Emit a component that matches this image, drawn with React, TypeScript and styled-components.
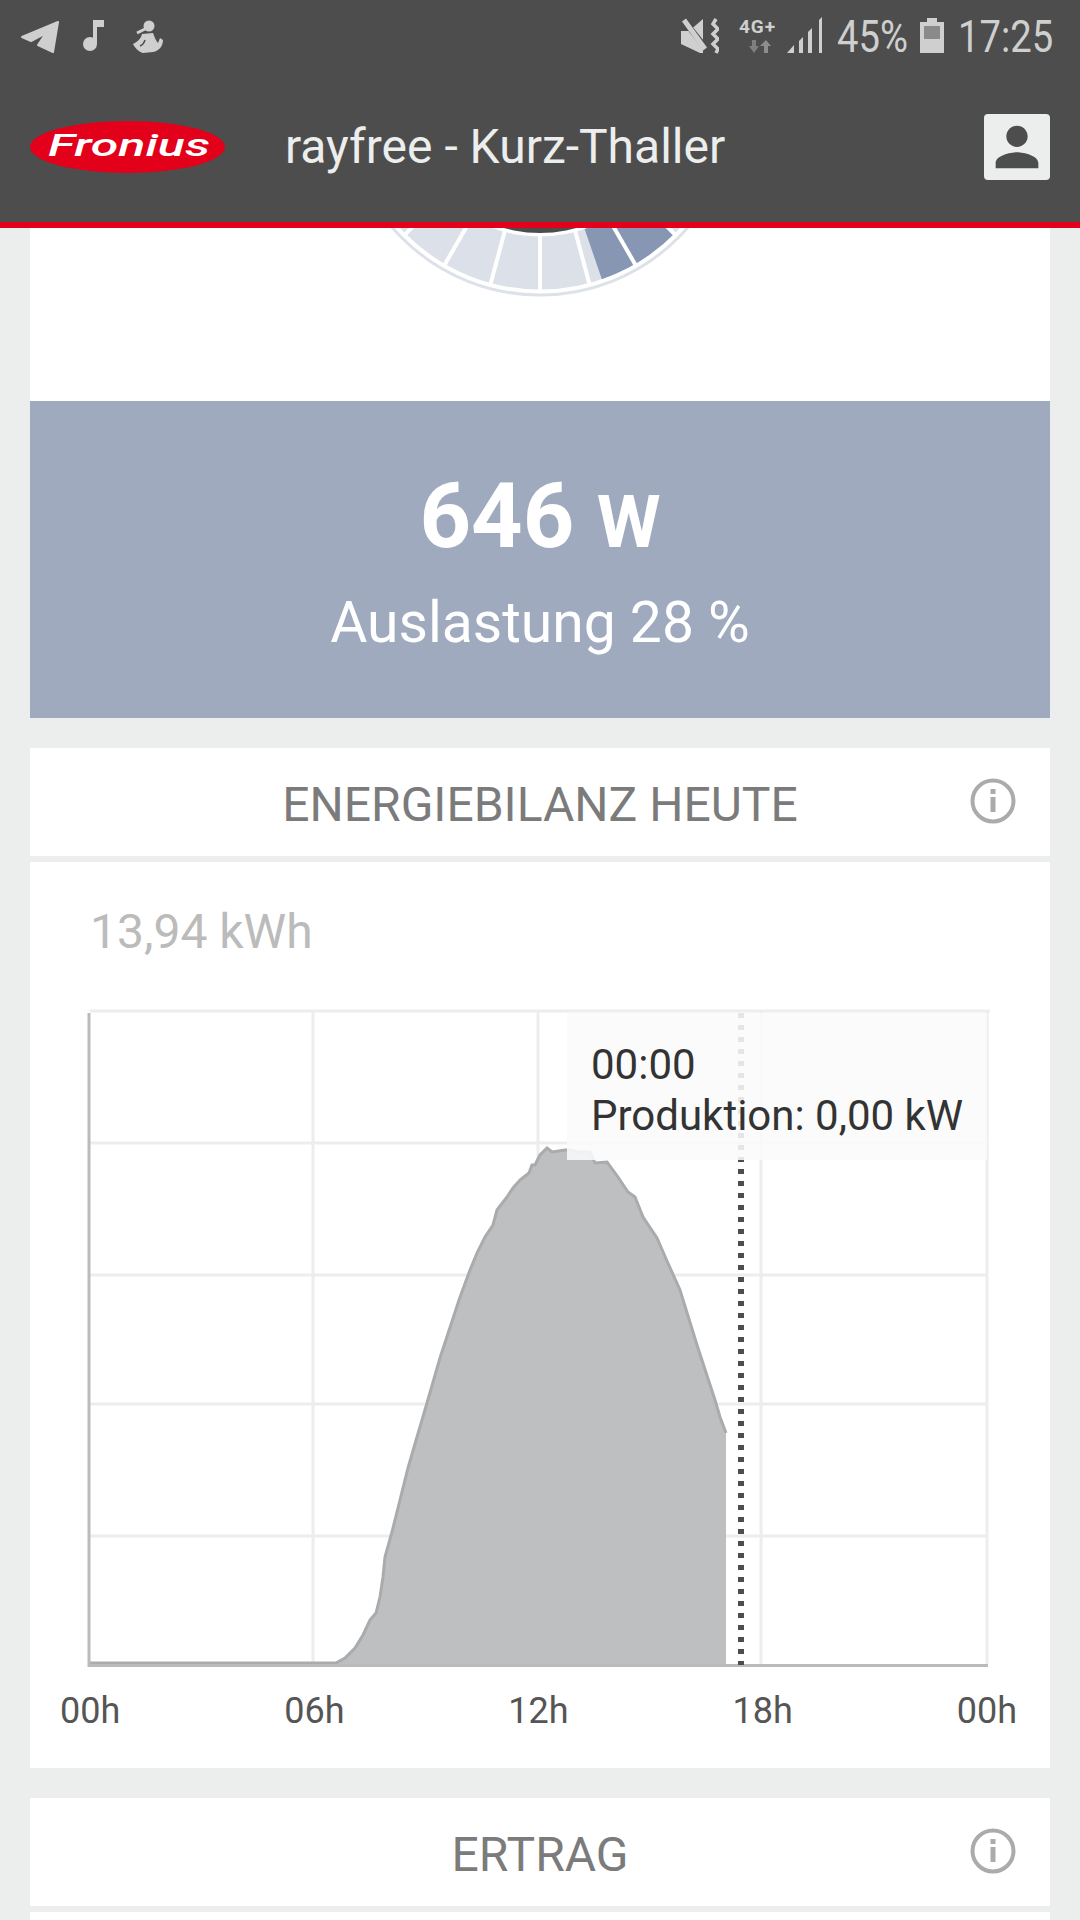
import styled, { createGlobalStyle } from "styled-components";
import { MdPerson } from "react-icons/md";

const CURVE: [number, number][] = [
  [90, 1663], [336, 1663], [345, 1658], [355, 1648], [363, 1635], [370, 1620], [376, 1613],
  [380, 1597], [383, 1577], [385, 1557], [392, 1532], [400, 1500], [408, 1468], [417, 1437],
  [427, 1403], [440, 1358], [459, 1300], [470, 1270], [477, 1253], [485, 1237], [493, 1225],
  [497, 1210], [507, 1197], [513, 1188], [520, 1180], [529, 1173], [532, 1165], [535, 1165],
  [540, 1155], [547, 1148], [552, 1152], [565, 1150], [568, 1150], [580, 1152], [590, 1152],
  [595, 1163], [607, 1162], [618, 1177], [628, 1192], [635, 1197], [643, 1217], [657, 1238],
  [667, 1261], [680, 1290], [697, 1345], [715, 1400], [720, 1417], [726, 1433],
];

const curveLine = CURVE.map(([x, y]) => `${x},${y}`).join(" ");
const curveArea = `${curveLine} 726,1665 90,1665`;

const GRID_X = [313, 538, 761, 987];
const GRID_Y = [1011, 1143, 1275, 1404, 1536];
const HOURS = ["00h", "06h", "12h", "18h", "00h"];

const GAUGE_X = 540;
const GAUGE_Y = 99.5;

// point on the gauge, angle counted from straight down, positive to the right
const gaugePoint = (deg: number, r: number) => {
  const a = (deg * Math.PI) / 180;
  return [GAUGE_X + r * Math.sin(a), GAUGE_Y + r * Math.cos(a)];
};

const arcSegment = (from: number, to: number, inner: number, outer: number) => {
  const [x1, y1] = gaugePoint(from, outer);
  const [x2, y2] = gaugePoint(to, outer);
  const [x3, y3] = gaugePoint(to, inner);
  const [x4, y4] = gaugePoint(from, inner);
  return `M${x1} ${y1}A${outer} ${outer} 0 0 0 ${x2} ${y2}L${x3} ${y3}A${inner} ${inner} 0 0 1 ${x4} ${y4}Z`;
};

const DIVIDERS = [-75, -60, -45, -30, -15, 0, 15, 30, 45, 60, 75];

const Gauge = () => (
  <GaugeSvg viewBox="30 228 1020 173">
    <circle cx={GAUGE_X} cy={GAUGE_Y} r={195.5} fill="none" stroke="#dde1e9" strokeWidth={3} />
    <circle cx={GAUGE_X} cy={GAUGE_Y} r={163.5} fill="none" stroke="#dce0e9" strokeWidth={53} />
    <path d={arcSegment(19, 45, 137, 190)} fill="#8797b3" />
    {DIVIDERS.map((deg) => {
      const [x1, y1] = gaugePoint(deg, 134);
      const [x2, y2] = gaugePoint(deg, 191);
      return <line key={deg} x1={x1} y1={y1} x2={x2} y2={y2} stroke="#fff" strokeWidth={4} />;
    })}
    <circle cx={GAUGE_X} cy={GAUGE_Y} r={133.5} fill="#4d4d4d" />
  </GaugeSvg>
);

const InfoIcon = () => (
  <InfoSvg viewBox="0 0 46 46">
    <circle cx={23} cy={23} r={20.5} fill="none" stroke="#a9abad" strokeWidth={4} />
    <rect x={20.5} y={11} width={5} height={5} fill="#a9abad" />
    <rect x={20.5} y={19} width={5} height={15} fill="#a9abad" />
  </InfoSvg>
);

const StatusBar = () => (
  <StatusRow>
    <StatusGroup>
      <svg width={38} height={37} viewBox="21 17 38 37">
        <path
          d="M22 37L58 22L53 52L38 45L46 33L31 41Z"
          fill="#cfcfcf"
          stroke="#cfcfcf"
          strokeWidth={2}
          strokeLinejoin="round"
        />
      </svg>
      <NoteIcon width={21} height={37} viewBox="83 17 21 37">
        <circle cx={90} cy={44} r={7} fill="#cfcfcf" />
        <path d="M93 44V20H104V27H97V44Z" fill="#cfcfcf" />
      </NoteIcon>
      <FigureIcon width={30} height={37} viewBox="133 17 30 37">
        <circle cx={149} cy={26} r={5.5} fill="#cfcfcf" />
        <path d="M137 33L147 28" stroke="#cfcfcf" strokeWidth={3} />
        <path
          d="M142 34L153 33C155 38 156 41 158 43L160 38L163 40C163 46 159 51 153 52L143 53C139 52 135 48 133 44C137 42 141 39 142 34Z"
          fill="#cfcfcf"
        />
        <path d="M140 46C143 45 144 43 145 40" fill="none" stroke="#4d4d4d" strokeWidth={1.5} />
      </FigureIcon>
    </StatusGroup>
    <StatusGroup>
      <svg width={38} height={37} viewBox="681 17 38 37">
        <path d="M681 31H689L703 19V53H700L681 44Z" fill="#cfcfcf" />
        <path d="M681 17L709 52" stroke="#4d4d4d" strokeWidth={6} />
        <path d="M684 20L705 49" stroke="#cfcfcf" strokeWidth={5} />
        <path
          d="M716 19L713 24L718 29L713 34L718 39L713 44L718 49L716 53"
          fill="none"
          stroke="#cfcfcf"
          strokeWidth={3.5}
        />
      </svg>
      <NetworkBlock>
        <NetworkLabel>4G+</NetworkLabel>
        <ArrowsIcon width={22} height={13} viewBox="0 0 22 13">
          <path d="M3 0H7V6H10L5 13L0 6H3Z" fill="#7f7f7f" />
          <path d="M15 13H19V6H22L17 0L11 6H15Z" fill="#8e8e8e" />
        </ArrowsIcon>
      </NetworkBlock>
      <SignalIcon width={35} height={37} viewBox="787 17 35 37">
        <path d="M787 53L794 45V53Z" fill="#cfcfcf" />
        <path d="M799 41L803 37V53H799Z" fill="#cfcfcf" />
        <path d="M808 32L812 28V53H808Z" fill="#cfcfcf" />
        <path d="M819 20L822 17V53H819Z" fill="#cfcfcf" />
      </SignalIcon>
      <StatusText $width={70} $gap={15}>
        45%
      </StatusText>
      <BatteryIcon width={24} height={37} viewBox="920 17 24 37">
        <path d="M927 18H937V22H944V53H920V22H927Z" fill="#cfcfcf" />
        <rect x={924} y={26} width={16} height={13} fill="#8a8a8a" />
      </BatteryIcon>
      <StatusText $width={95} $gap={14}>
        17:25
      </StatusText>
    </StatusGroup>
  </StatusRow>
);

export default function App() {
  return (
    <Page>
      <GlobalStyle />
      <Header>
        <StatusBar />
        <AppBar>
          <LogoSvg viewBox="0 0 195 52">
            <ellipse cx={97.5} cy={26} rx={97.5} ry={26} fill="#e2001a" />
            <text
              x={18}
              y={35}
              textLength={162}
              lengthAdjust="spacingAndGlyphs"
              fill="#fff"
              fontFamily="Roboto, sans-serif"
              fontStyle="italic"
              fontWeight={500}
              fontSize={32}
            >
              Fronius
            </text>
          </LogoSvg>
          <SiteTitle>rayfree - Kurz-Thaller</SiteTitle>
          <UserButton>
            <MdPerson size={64} color="#4d4d4d" />
          </UserButton>
        </AppBar>
      </Header>
      <Main>
        <Section>
          <GaugePanel>
            <Gauge />
          </GaugePanel>
          <PowerPanel>
            <PowerValue>
              646 <PowerUnit>W</PowerUnit>
            </PowerValue>
            <PowerLoad>Auslastung 28 %</PowerLoad>
          </PowerPanel>
        </Section>
        <Section>
          <CardHeader>
            <CardTitle>ENERGIEBILANZ HEUTE</CardTitle>
            <InfoIcon />
          </CardHeader>
          <ChartCard>
            <TotalEnergy>13,94 kWh</TotalEnergy>
            <ChartWrap>
              <svg width={960} height={660} viewBox="60 1008 960 660">
                <line x1={90} y1={1011} x2={990} y2={1011} stroke="#ededed" strokeWidth={3} />
                {GRID_Y.slice(1).map((y) => (
                  <line key={y} x1={90} y1={y} x2={988} y2={y} stroke="#ededed" strokeWidth={3} />
                ))}
                {GRID_X.map((x) => (
                  <line key={x} x1={x} y1={1011} x2={x} y2={1665} stroke="#ededed" strokeWidth={3} />
                ))}
                <polygon points={curveArea} fill="#bbbcbe" fillOpacity={0.95} />
                <polyline points={curveLine} fill="none" stroke="#a9abad" strokeWidth={3} />
                <line x1={89} y1={1013} x2={89} y2={1667} stroke="#bbb" strokeWidth={3} />
                <line x1={88} y1={1665.5} x2={988} y2={1665.5} stroke="#bbb" strokeWidth={3} />
                <line
                  x1={741}
                  y1={1013}
                  x2={741}
                  y2={1665}
                  stroke="#4d4d4d"
                  strokeWidth={6}
                  strokeDasharray="5 7"
                />
              </svg>
              <ChartTooltip>
                <span>00:00</span>
                <span>Produktion: 0,00 kW</span>
              </ChartTooltip>
            </ChartWrap>
            <HourRow>
              {HOURS.map((hour, i) => (
                <HourLabel key={i}>{hour}</HourLabel>
              ))}
            </HourRow>
          </ChartCard>
        </Section>
        <Section>
          <CardHeader>
            <CardTitle>ERTRAG</CardTitle>
            <InfoIcon />
          </CardHeader>
          <EmptyCard />
        </Section>
      </Main>
    </Page>
  );
}

const GlobalStyle = createGlobalStyle`
  html, body {
    margin: 0;
    padding: 0;
    background: #eceeed;
  }

  * {
    box-sizing: border-box;
  }
`;

const Page = styled.div`
  width: 1080px;
  height: 1920px;
  overflow: hidden;
  background: #eceeed;
  font-family: Roboto, "Liberation Sans", sans-serif;
`;

const Header = styled.header`
  height: 228px;
  background: #4d4d4d;
  border-bottom: 6px solid #e2001a;
`;

const StatusRow = styled.div`
  height: 72px;
  padding: 17px 27px 0 21px;
  display: flex;
  justify-content: space-between;
  align-items: flex-start;
`;

const StatusGroup = styled.div`
  display: flex;
  align-items: flex-start;
`;

const NoteIcon = styled.svg`
  margin-left: 24px;
`;

const FigureIcon = styled.svg`
  margin-left: 29px;
`;

const NetworkBlock = styled.div`
  width: 37px;
  margin: 3px 0 0 20px;
  display: flex;
  flex-direction: column;
  align-items: center;
`;

const NetworkLabel = styled.span`
  font-size: 19px;
  line-height: 14px;
  font-weight: 700;
  letter-spacing: 1px;
  color: #cfcfcf;
  white-space: nowrap;
`;

const ArrowsIcon = styled.svg`
  margin: 6px 0 0 4px;
`;

const SignalIcon = styled.svg`
  margin-left: 11px;
`;

const StatusText = styled.span<{ $width: number; $gap: number }>`
  flex: none;
  width: ${({ $width }) => $width}px;
  margin: 1px 0 0 ${({ $gap }) => $gap}px;
  font-size: 45px;
  line-height: 37px;
  color: #cfcfcf;
  white-space: nowrap;
  transform: scaleX(0.85);
  transform-origin: left center;
`;

const BatteryIcon = styled.svg`
  margin-left: 13px;
`;

const AppBar = styled.div`
  height: 150px;
  padding: 0 30px;
  display: flex;
  align-items: center;
`;

const LogoSvg = styled.svg`
  width: 195px;
  height: 52px;
  flex-shrink: 0;
`;

const SiteTitle = styled.h1`
  margin: 0 0 2px 60px;
  flex: 1;
  font-size: 48px;
  font-weight: 400;
  color: #eceeed;
  white-space: nowrap;
`;

const UserButton = styled.div`
  width: 66px;
  height: 66px;
  border-radius: 4px;
  background: #eceeed;
  display: flex;
  align-items: center;
  justify-content: center;
`;

const Main = styled.main`
  padding: 0 30px;
  display: flex;
  flex-direction: column;
  gap: 30px;
`;

const Section = styled.section`
  display: flex;
  flex-direction: column;
`;

const GaugePanel = styled.div`
  height: 173px;
  background: #fff;
`;

const GaugeSvg = styled.svg`
  display: block;
  width: 1020px;
  height: 173px;
`;

const PowerPanel = styled.div`
  height: 317px;
  background: #9faabf;
  color: #fff;
  display: flex;
  flex-direction: column;
  align-items: center;
  padding-top: 64px;
`;

const PowerValue = styled.div`
  font-size: 90px;
  line-height: 104px;
  font-weight: 700;
`;

const PowerUnit = styled.span`
  font-size: 73px;
`;

const PowerLoad = styled.div`
  margin-top: 18px;
  font-size: 57px;
  line-height: 62px;
`;

const CardHeader = styled.div`
  position: relative;
  height: 108px;
  margin-bottom: 6px;
  padding-top: 5px;
  background: #fff;
  display: flex;
  align-items: center;
  justify-content: center;
`;

const CardTitle = styled.h2`
  margin: 0;
  font-size: 48px;
  font-weight: 400;
  color: #7b7b7b;
`;

const InfoSvg = styled.svg`
  position: absolute;
  right: 34px;
  top: 30px;
  width: 46px;
  height: 46px;
`;

const ChartCard = styled.div`
  height: 906px;
  padding: 43px 30px 0;
  background: #fff;
`;

const TotalEnergy = styled.div`
  padding-left: 30px;
  font-size: 48px;
  line-height: 54px;
  color: #bbb;
`;

const ChartWrap = styled.div`
  position: relative;
  margin-top: 49px;
  height: 660px;

  svg {
    display: block;
  }
`;

const ChartTooltip = styled.div`
  position: absolute;
  left: 507px;
  top: 5px;
  width: 420px;
  height: 147px;
  padding: 26px 24px;
  background: rgba(250, 250, 250, 0.88);
  display: flex;
  flex-direction: column;
  font-size: 42px;
  line-height: 51px;
  color: #333;
  white-space: nowrap;
`;

const HourRow = styled.div`
  margin: 24px 3px 0 0;
  display: flex;
  justify-content: space-between;
`;

const HourLabel = styled.span`
  font-size: 36px;
  line-height: 38px;
  color: #555;
`;

const EmptyCard = styled.div`
  height: 120px;
  background: #fff;
`;
